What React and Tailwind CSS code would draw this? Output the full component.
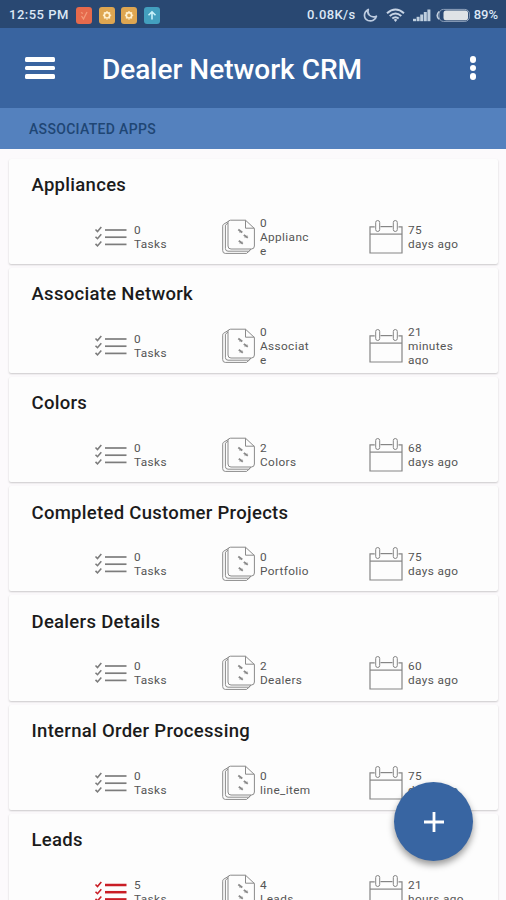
const CARDS = [
  { title: 'Appliances', tasks: 0, count: 0, label: ['Applianc', 'e'], age: ['75', 'days ago'] },
  { title: 'Associate Network', tasks: 0, count: 0, label: ['Associat', 'e'], age: ['21', 'minutes', 'ago'] },
  { title: 'Colors', tasks: 0, count: 2, label: ['Colors'], age: ['68', 'days ago'] },
  { title: 'Completed Customer Projects', tasks: 0, count: 0, label: ['Portfolio'], age: ['75', 'days ago'] },
  { title: 'Dealers Details', tasks: 0, count: 2, label: ['Dealers'], age: ['60', 'days ago'] },
  { title: 'Internal Order Processing', tasks: 0, count: 0, label: ['line_item'], age: ['75', 'days ago'] },
  { title: 'Leads', tasks: 5, count: 4, label: ['Leads'], age: ['21', 'hours ago'] },
];

function TasksIcon({ alert }) {
  return (
    <svg width="34" height="24" viewBox="0 0 34 24" fill="none" className={alert ? 'text-[#c91d25]' : 'text-[#7c7c7c]'} stroke="currentColor">
      {[4.7, 11.9, 19.1].map((y) => (
        <g key={y}>
          <path d={`M1.5 ${y - 0.2}l2 2L7.3 ${y - 2.6}`} strokeWidth="1.6" />
          <path d={`M11 ${y + 0.3}H32.5`} strokeWidth={alert ? 2.5 : 1.7} />
        </g>
      ))}
    </svg>
  );
}

function PapersIcon() {
  return (
    <svg width="34" height="36" viewBox="0 0 34 36" fill="none" stroke="#8a8a8a" strokeWidth="1" strokeLinejoin="round">
      <path d="M6 2.6L1.4 5.4Q.7 6 .7 7.2V31.5Q.7 34.4 3.3 34.4H24.5L28.5 31" />
      <path d="M6 4L3.4 6.2V29.5Q3.4 32.2 6 32.2H26.5L30 29.2" />
      <path d="M8.5 1.2H23.5L32.4 9.5V27Q32.4 30 29.4 30H9Q6 30 6 27V3.7Q6 1.2 8.5 1.2Z" fill="#fdfdfd" />
      <path d="M23.5 1.2V9.2H32.4" />
      <path d="M16.3 10.6l4 3M21.8 16l4 2.8M16.8 21.8l4 3" strokeWidth="1.9" />
      <path d="M17 13.2l3-.6M22.5 18.6l3-1.8M17.5 24.4l3-1.6" strokeWidth=".7" />
    </svg>
  );
}

function CalendarIcon() {
  return (
    <svg width="34" height="36" viewBox="0 0 34 36" fill="none" stroke="#858585" strokeWidth="1.2">
      <path d="M5.7 7.8H1V34H33V7.8H29.5" />
      <path d="M11.5 7.6H23.5" />
      <path d="M1 15.1H33" />
      <rect x="6.7" y="1.5" width="4" height="11" rx="2" strokeWidth="1" />
      <rect x="24.3" y="1.5" width="4" height="11" rx="2" strokeWidth="1" />
    </svg>
  );
}

function Stat({ icon, lines, className }) {
  return (
    <div className={`flex shrink-0 items-center ${className}`}>
      {icon}
      <div className="flex h-[42px] flex-col justify-center whitespace-nowrap text-[11.8px] leading-[14px] tracking-[0.38px] text-[#555]">
        {lines.map((l) => (
          <div key={l} className={l === 'ago' ? 'h-[14px] [clip-path:inset(0_0_2px_0)]' : 'h-[14px]'}>{l}</div>
        ))}
      </div>
    </div>
  );
}

function Card({ card }) {
  return (
    <section className="h-[105.2px] shrink-0 rounded-[2px] bg-[#fdfdfd] pt-[14.4px] shadow-[0_1px_2px_rgba(0,0,0,0.2)]">
      <h2 className="ml-[22.5px] text-[18.5px] font-medium leading-6 tracking-[0.3px] text-[#1b1b1b]">{card.title}</h2>
      <div className="mt-[18.6px] flex items-center">
        <Stat className="ml-[85px] w-[128px] gap-[6px]" icon={<TasksIcon alert={card.tasks > 0} />} lines={[String(card.tasks), 'Tasks']} />
        <Stat className="w-[147px] gap-1" icon={<PapersIcon />} lines={[String(card.count), ...card.label]} />
        <Stat className="gap-[5px]" icon={<CalendarIcon />} lines={card.age} />
      </div>
    </section>
  );
}

function StatusBar() {
  return (
    <div className="flex h-7 shrink-0 items-center bg-[#294872] pt-[2px] text-[#dce7f5]">
      <span className="ml-[9px] w-[61px] whitespace-nowrap text-[13px] font-medium tracking-[0.5px]">12:55 PM</span>
      <div className="ml-[6px] flex gap-[6.5px]">
        <svg width="16" height="17" viewBox="0 0 16 17" fill="none">
          <rect width="16" height="17" rx="3" fill="#e66a4c" />
          <path d="M5 5.5l2 1M5.5 9l2 3 3.5-7" stroke="#f49a78" strokeWidth="1.3" />
        </svg>
        {[0, 1].map((i) => (
          <svg key={i} width="16" height="17" viewBox="0 0 16 17" fill="none">
            <rect width="16" height="17" rx="3" fill="#dea651" />
            <circle cx="8" cy="8.3" r="2.7" stroke="#fff1cf" strokeWidth="1.7" />
            <path d="M8 4v1M8 11.7v1M3.9 8.3h1M11.2 8.3h1M5 5.3l.8.8M11 11.3l-.8-.8M5 11.3l.8-.8M11 5.3l-.8.8" stroke="#fff1cf" strokeWidth="1.2" />
          </svg>
        ))}
        <svg width="16" height="17" viewBox="0 0 16 17" fill="none">
          <rect width="16" height="17" rx="3" fill="#439fbe" />
          <path d="M8 12.5V5M4.5 8.2L8 4.8l3.5 3.4" stroke="#c9f2fa" strokeWidth="1.6" />
        </svg>
      </div>
      <span className="ml-auto whitespace-nowrap text-[13px] font-medium tracking-[0.4px]">0.08K/s</span>
      <svg className="ml-[7px]" width="15" height="15" viewBox="0 0 15 15" fill="none" stroke="#bdcce0" strokeWidth="1.7" strokeLinejoin="round">
        <path d="M5.3 1.5C3.5 5.7 7.4 10.4 13.4 8.2C12.5 12 8.7 13.8 5 12.5C.3 10.7.2 4.2 5.3 1.5Z" />
      </svg>
      <svg className="ml-[8px]" width="19" height="15" viewBox="0 0 19 15" fill="none" stroke="#c7d4e5" strokeWidth="2">
        <path d="M1 5.2Q9.5-2.2 18 5.2M3.7 8Q9.5 3 15.3 8M6.3 10.5Q9.5 7.9 12.7 10.5" />
        <path d="M7.7 11.7Q9.5 10.5 11.3 11.7L9.5 13.9Z" fill="#c7d4e5" stroke="none" />
      </svg>
      <svg className="ml-[8px]" width="18" height="14" viewBox="0 0 18 14" fill="#bfcfdf">
        <rect x="0" y="10.8" width="3" height="2.4" />
        <rect x="3.6" y="8.8" width="3" height="4.4" />
        <rect x="7.2" y="6.5" width="3" height="6.7" />
        <rect x="10.8" y="4" width="3" height="9.2" />
        <rect x="14.4" y="1.5" width="3" height="11.7" />
      </svg>
      <svg className="ml-[5px]" width="34" height="15" viewBox="0 0 34 15" fill="none">
        <rect x="3" y="1.4" width="30.4" height="12" rx="4.5" stroke="#8fa2bb" strokeWidth="1" />
        <rect x="7.5" y="2.6" width="24.5" height="9.6" rx="2.5" fill="#dfe3e6" />
        <path d="M3.2 3.5Q-.9 7.4 3.2 11.3" stroke="#c3cfdd" strokeWidth="1.5" />
      </svg>
      <span className="ml-1 mr-[8px] whitespace-nowrap text-[13px] font-medium">89%</span>
    </div>
  );
}

export default function App() {
  return (
    <div className="relative flex h-[900px] w-[506px] flex-col overflow-hidden bg-[#fcfafc] font-['Roboto','Liberation_Sans',sans-serif]">
      <StatusBar />
      <header className="flex h-20 shrink-0 items-center bg-[#3964a0]">
        <div className="ml-[25px] flex w-[30px] flex-col gap-[4px]">
          <span className="h-[4.5px] rounded-[1.5px] bg-white" />
          <span className="h-[4.5px] rounded-[1.5px] bg-white" />
          <span className="h-[4.5px] rounded-[1.5px] bg-white" />
        </div>
        <h1 className="ml-[47px] mt-[4px] whitespace-nowrap text-[28px] font-medium text-white">Dealer Network CRM</h1>
        <div className="ml-auto mr-[30px] flex flex-col gap-[2.4px]">
          <span className="size-[6.2px] rounded-full bg-white" />
          <span className="size-[6.2px] rounded-full bg-white" />
          <span className="size-[6.2px] rounded-full bg-white" />
        </div>
      </header>
      <div className="flex h-[41px] shrink-0 items-center bg-[#5481be] pl-[29px] pt-[2px] text-[14px] font-medium tracking-[0.32px] text-[#1f4674]">ASSOCIATED APPS</div>
      <main className="flex flex-col gap-1 pl-[9px] pr-2 pt-[9.7px]">
        {CARDS.map((card) => <Card key={card.title} card={card} />)}
      </main>
      <button className="absolute left-[394px] top-[782px] flex size-[79px] items-center justify-center rounded-full bg-[#3865a2] shadow-[0_4px_7px_rgba(0,0,0,0.4)]" aria-label="Add">
        <svg width="20" height="20" viewBox="0 0 20 20" stroke="#fff" strokeWidth="2.8">
          <path d="M10 0V20M0 10H20" />
        </svg>
      </button>
    </div>
  );
}
